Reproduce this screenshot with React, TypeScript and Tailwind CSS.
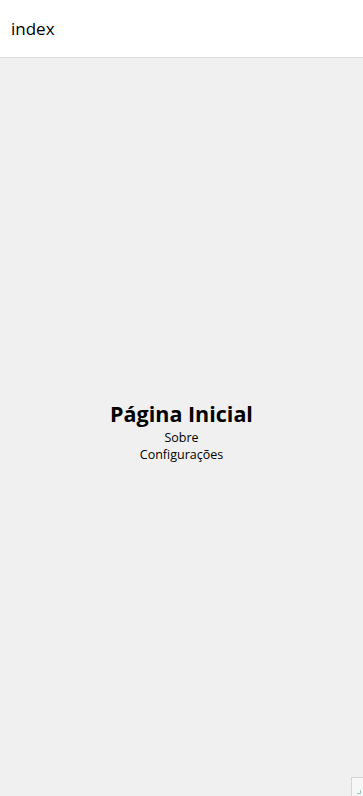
import React from 'react';

export default function App() {
  return (
    <div
      className="flex h-[796px] w-full flex-col bg-[#f0f0f0] text-black"
      style={{ fontFamily: '"Open Sans", "Noto Sans", sans-serif' }}
    >
      {/* Top bar */}
      <header className="flex h-[58px] shrink-0 items-center border-b border-[#dcdcdc] bg-white px-[11px]">
        <span className="text-[17px] leading-none">index</span>
      </header>

      {/* Content */}
      <main className="relative flex flex-1 flex-col items-center justify-center">
        <div className="mt-[6px] flex flex-col items-center">
          <h1 className="text-[21.5px] font-bold leading-[31px]">Página Inicial</h1>
          <p className="text-[12.5px] leading-[17px]">Sobre</p>
          <p className="text-[12.5px] leading-[17px]">Configurações</p>
        </div>

        {/* resize grip */}
        <div className="absolute bottom-0 right-0 h-[19px] w-[12px] border-l border-t border-[#d6d6d6] bg-[#f7f7f7]">
          <div className="absolute bottom-[2px] right-[2px] h-[4px] w-[4px] border-b border-r border-[#9bc7b9]" />
        </div>
      </main>
    </div>
  );
}
